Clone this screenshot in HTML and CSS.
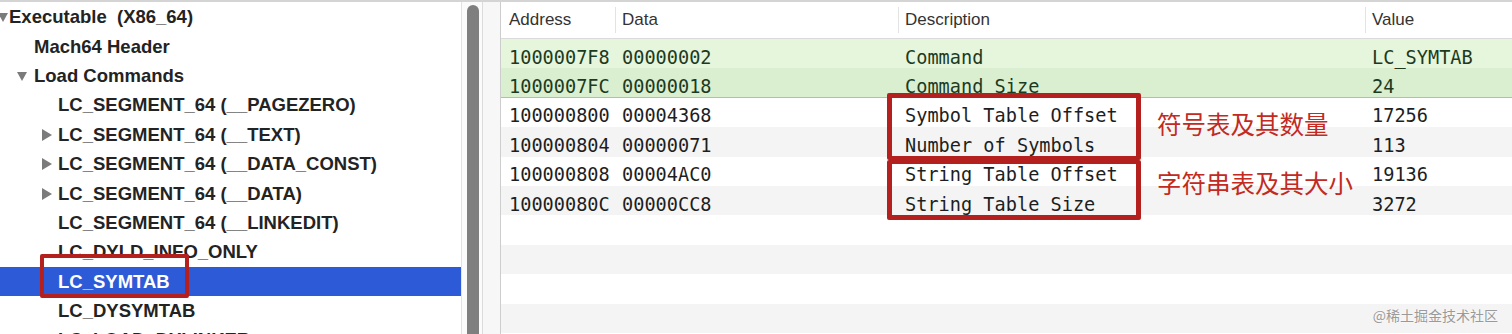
FILE: index.html
```html
<!DOCTYPE html>
<html lang="en">
<head>
  <meta charset="UTF-8" />
  <title>MachOView - LC_SYMTAB</title>
  <link rel="stylesheet" href="styles.css">
</head>
<body>
  <div class="topline"></div>
  <div class="window">
    <div class="tree">
      <div class="row lv0"><span class="tog down"></span>Executable&nbsp;&nbsp;(X86_64)</div>
      <div class="row lv1"><span class="tog"></span>Mach64 Header</div>
      <div class="row lv1"><span class="tog down"></span>Load Commands</div>
      <div class="row lv2"><span class="tog"></span>LC_SEGMENT_64 (__PAGEZERO)</div>
      <div class="row lv2"><span class="tog right"></span>LC_SEGMENT_64 (__TEXT)</div>
      <div class="row lv2"><span class="tog right"></span>LC_SEGMENT_64 (__DATA_CONST)</div>
      <div class="row lv2"><span class="tog right"></span>LC_SEGMENT_64 (__DATA)</div>
      <div class="row lv2"><span class="tog"></span>LC_SEGMENT_64 (__LINKEDIT)</div>
      <div class="row lv2"><span class="tog"></span>LC_DYLD_INFO_ONLY</div>
      <div class="row lv2 selected"><span class="tog"></span>LC_SYMTAB</div>
      <div class="row lv2"><span class="tog"></span>LC_DYSYMTAB</div>
      <div class="row lv2 last"><span class="tog"></span>LC_LOAD_DYLINKER</div>
      <div class="mark tree-mark"></div>
    </div>
    <div class="scroll"><div class="thumb"></div></div>
    <div class="divider"></div>
    <div class="detail">
      <div class="grid head">
        <div class="cell">Address</div>
        <div class="cell sep">Data</div>
        <div class="cell sep">Description</div>
        <div class="cell sep">Value</div>
      </div>
      <div class="grid data green g1">
        <div class="cell">1000007F8</div><div class="cell">00000002</div><div class="cell">Command</div><div class="cell">LC_SYMTAB</div>
      </div>
      <div class="grid data green g2">
        <div class="cell">1000007FC</div><div class="cell">00000018</div><div class="cell">Command Size</div><div class="cell">24</div>
      </div>
      <div class="grid data">
        <div class="cell">100000800</div><div class="cell">00004368</div><div class="cell">Symbol Table Offset</div><div class="cell">17256</div>
      </div>
      <div class="grid data alt">
        <div class="cell">100000804</div><div class="cell">00000071</div><div class="cell">Number of Symbols</div><div class="cell">113</div>
      </div>
      <div class="grid data">
        <div class="cell">100000808</div><div class="cell">00004AC0</div><div class="cell">String Table Offset</div><div class="cell">19136</div>
      </div>
      <div class="grid data alt">
        <div class="cell">10000080C</div><div class="cell">00000CC8</div><div class="cell">String Table Size</div><div class="cell">3272</div>
      </div>
      <div class="grid data"></div>
      <div class="grid data alt"></div>
      <div class="grid data"></div>
      <div class="grid data alt"></div>

      <div class="mark box-sym"></div>
      <div class="mark box-str"></div>
      <div class="note note-sym">符号表及其数量</div>
      <div class="note note-str">字符串表及其大小</div>
    </div>
  </div>
  <div class="watermark">@稀土掘金技术社区</div>
</body>
</html>
```

FILE: styles.css
```css
html, body {
  margin: 0;
  width: 1512px;
  height: 334px;
  overflow: hidden;
  background: #fff;
}
body {
  position: relative;
  font-family: 'Liberation Sans', Arial, sans-serif;
  color: #222;
}
.topline {
  height: 2px;
  background: #d4d4d4;
}
.window {
  display: flex;
  height: 332px;
}

/* left outline */
.tree {
  position: relative;
  width: 461px;
  border-right: 1px solid #e2e2e2;
  overflow: hidden;
}
.row {
  display: flex;
  align-items: center;
  height: 29.4px;
  padding-top: 1px;
  box-sizing: border-box;
  font-size: 18.5px;
  font-weight: 700;
  color: #232323;
  white-space: nowrap;
}
.row.last {
  align-items: flex-start;
  padding-top: 4px;
}
.row.selected {
  background: #2d5ad7;
  color: #fff;
}
.lv0 { padding-left: 0; }
.lv1 { padding-left: 17px; }
.lv2 { padding-left: 42px; }
.tog {
  display: inline-block;
  flex: none;
  width: 16px;
  height: 12px;
  position: relative;
}
.lv0 .tog { width: 9px; }
.lv1 .tog { width: 17px; }
.tog.down::before {
  content: "";
  position: absolute;
  left: 0;
  top: 2px;
  border-left: 5px solid transparent;
  border-right: 5px solid transparent;
  border-top: 9px solid #7b7b7b;
}
.lv0 .tog.down::before { left: -2px; }
.tog.right::before {
  content: "";
  position: absolute;
  left: 0;
  top: 0;
  border-top: 6px solid transparent;
  border-bottom: 6px solid transparent;
  border-left: 10px solid #7b7b7b;
}

/* scrollbar and split divider */
.scroll {
  width: 21px;
  background: #fbfbfb;
  border-right: 1px solid #dcdcdc;
  padding-left: 5px;
  box-sizing: border-box;
}
.thumb {
  margin-top: 3px;
  width: 12px;
  height: 340px;
  background: #7f7f7f;
  border-radius: 6px;
}
.divider {
  width: 17px;
  background: #f7f7f7;
  border-right: 1px solid #cdcdcd;
}

/* right table */
.detail {
  position: relative;
  flex: 1;
  overflow: hidden;
}
.grid {
  display: grid;
  grid-template-columns: 114px 283px 467px 1fr;
}
.head {
  height: 36px;
  border-bottom: 1px solid #dadada;
  font-size: 17px;
  color: #333;
}
.head .cell {
  display: flex;
  align-items: center;
  padding-left: 8px;
  margin: 5px 0;
}
.head .cell.sep {
  border-left: 1px solid #e3e3e3;
  padding-left: 6px;
}
.data {
  height: 29.4px;
  font-family: 'DejaVu Sans Mono', 'Liberation Mono', monospace;
  font-size: 18.6px;
  color: #1e1e1e;
}
.data .cell {
  display: flex;
  align-items: center;
  padding: 7px 0 0 7px;
  white-space: nowrap;
}
.data .cell:first-child { padding-left: 8px; }
.green { color: #1d3a1f; }
.g1 { background: #e5f6dc; }
.g2 {
  background: #d9efcf;
  border-bottom: 1px solid #b9b9b9;
  height: 28.4px;
}
.alt { background: #f4f4f4; }

/* annotations */
.mark {
  position: absolute;
  border: 4px solid #b4201e;
  border-radius: 2px;
  box-sizing: border-box;
}
.tree-mark {
  left: 40px;
  top: 252px;
  width: 149px;
  height: 44px;
}
.box-sym {
  left: 386px;
  top: 91px;
  width: 254px;
  height: 67px;
  border-width: 5px 5px 4px;
}
.box-str {
  left: 386px;
  top: 158px;
  width: 254px;
  height: 60px;
  border-width: 4px 5px 5px;
}
.note {
  position: absolute;
  left: 656px;
  font-family: 'Noto Sans CJK SC', sans-serif;
  font-size: 24.5px;
  line-height: 1;
  color: #c22a22;
}
.note-sym { top: 110px; }
.note-str { top: 169px; }

.watermark {
  position: absolute;
  right: 14px;
  bottom: 12px;
  font-family: 'Noto Sans CJK SC', sans-serif;
  font-size: 14px;
  line-height: 1;
  color: #9a9a9a;
  text-shadow: 0 0 2px #fff;
}
```
